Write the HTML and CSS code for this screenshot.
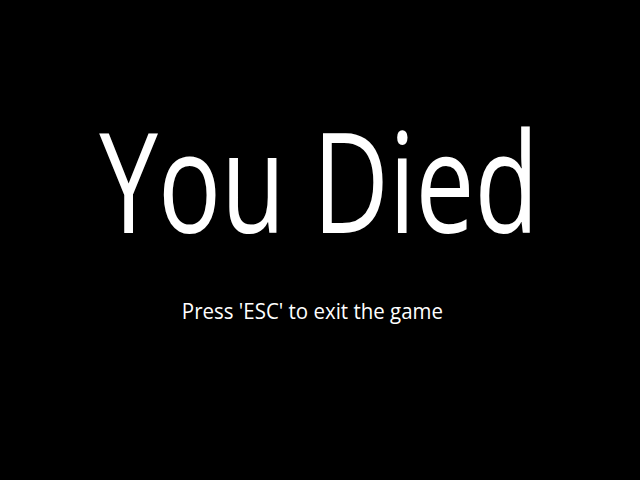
FILE: index.html
```html
<!DOCTYPE html>
<html>
<head>
<meta charset="utf-8">
<link rel="stylesheet" href="styles.css">
</head>
<body>
<main class="screen">
  <h1 class="title">You Died</h1>
  <p class="hint">Press 'ESC' to exit the game</p>
</main>
</body>
</html>
```
FILE: styles.css
```css
html, body {
  margin: 0;
  padding: 0;
  background: #000;
}
.screen {
  width: 640px;
  height: 480px;
  box-sizing: border-box;
  padding-right: 2px;
  display: flex;
  flex-direction: column;
  align-items: center;
  color: #fff;
  font-family: "Open Sans", "DejaVu Sans", sans-serif;
}
.title {
  margin: 0;
  margin-top: 104px;
  font-size: 140px;
  font-weight: 400;
  line-height: 150px;
  white-space: nowrap;
  transform: scaleX(0.75);
}
.hint {
  margin: 0 13px 0 0;
  margin-top: 43px;
  font-size: 22px;
  font-weight: 400;
  line-height: 26px;
  white-space: nowrap;
  transform: scaleX(0.93);
}
```
